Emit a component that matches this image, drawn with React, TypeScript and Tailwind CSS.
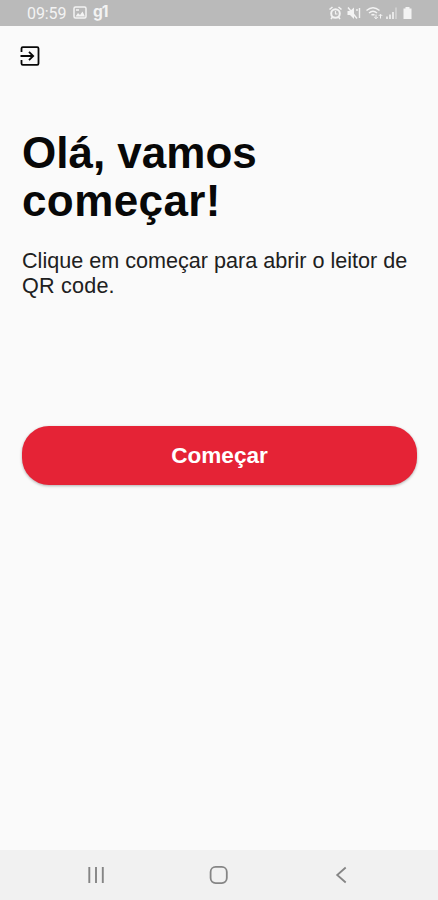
function StatusBar() {
  return (
    <header className="flex h-[26px] shrink-0 items-center justify-between bg-[#bababa] pr-[24px] pl-[27px] text-[#f3f3f3]">
      <div className="flex items-center">
        <span className="w-[39px] pt-[1px] font-[Roboto,sans-serif] text-[16px] leading-[26px] tracking-[-0.1px]">09:59</span>
        <svg className="ml-[7px] h-[14px] w-[14px]" viewBox="0 0 14 14" fill="none" stroke="currentColor" strokeWidth="1.5">
          <rect x="1" y="1" width="12" height="11" rx="1.5" />
          <path d="M2.5 10.5 5 7l2 2 2.5-3.5 2.5 5Z" fill="currentColor" stroke="none" />
          <path d="M3 4h3" />
        </svg>
        <span className="-mt-[2px] ml-[6px] font-[Inter,sans-serif] text-[15.5px] leading-[24px] font-bold tracking-[-1px]">g1</span>
      </div>
      <svg className="h-[18px] w-[86px]" viewBox="0 0 86 18" fill="none" stroke="currentColor" strokeWidth="1.4">
        <circle cx="7.5" cy="9.5" r="4.3" strokeWidth="2" />
        <path d="M1.5 5.5 4.5 3M13.5 5.5l-3-2.5M3 15l1.5-2M12 15l-1.5-2" strokeWidth="1.6" />
        <path d="M7.5 7v3h2" strokeWidth="1.2" />
        <path d="M19.5 7h2.5l4-3.5v11.5l-4-4h-2.5z" fill="currentColor" stroke="none" />
        <path d="m20 3.5 9 11M29 5v2M31.5 4v10" />
        <path d="M38.5 6.5q6.5-5.5 13 0M41 9q4-3.5 8 0M43.5 11.3q1.5-1.5 3 0" />
        <path d="M48 10.5v4m-1.8-1.5 1.8 1.8 1.8-1.8M52.5 14.5v-4m-1.8 1.5 1.8-1.8 1.8 1.8" strokeWidth="1" />
        <path d="M59 12.5v2.5M62 10.5v4.5M65 8v7" strokeWidth="1.6" />
        <path d="M68 3.5v11.5" strokeWidth="1.6" opacity=".45" />
        <path d="M75.5 4.5h2v-1.5h4v1.5h2v10.5h-8z" fill="currentColor" stroke="none" />
      </svg>
    </header>
  );
}

function NavigationBar() {
  return (
    <nav className="flex h-[50px] shrink-0 items-center justify-between bg-[#f1f1f1] px-[86px] text-[#858585]">
      <svg className="h-5 w-5" viewBox="0 0 20 20" stroke="currentColor" strokeWidth="1.9">
        <path d="M3.3 2v16M10 2v16M16.8 2v16" />
      </svg>
      <svg className="h-5 w-5" viewBox="0 0 20 20" fill="none" stroke="currentColor" strokeWidth="1.8">
        <rect x="1.6" y="1.9" width="16.2" height="16.2" rx="5" />
      </svg>
      <svg className="h-5 w-5" viewBox="0 0 20 20" fill="none" stroke="currentColor" strokeWidth="1.8">
        <path d="m13.7 2.500-8.500 7.500 8.500 7.500" />
      </svg>
    </nav>
  );
}

export default function App() {
  return (
    <div className="flex h-[900px] w-full flex-col overflow-hidden bg-[#fafafa] font-['Liberation_Sans',Arial,sans-serif] text-[#080808]">
      <StatusBar />
      <main className="flex flex-1 flex-col px-[22px] pt-[20px]">
        <button aria-label="Sair" className="-ml-[2px] h-5 w-5">
          <svg className="h-5 w-5" viewBox="0 0 20 20" fill="none" stroke="currentColor" strokeWidth="1.8">
            <path d="M1.500 6V2.500q0-1.300 1.300-1.300h14.400q1.300 0 1.300 1.300v15q0 1.300-1.300 1.300h-14.400q-1.300 0-1.300-1.300V14M0.500 10h12M9 5.800l4.200 4.200-4.200 4.200" />
          </svg>
        </button>
        <h1 className="mt-[63px] text-[44px] leading-[47.5px] font-bold">
          Olá, vamos
          <br />
          <span className="tracking-[0.4px]">começar!</span>
        </h1>
        <p className="mt-[24px] text-[21.6px] leading-[25px] whitespace-nowrap text-[#202020]">
          Clique em começar para abrir o leitor de
          <br />
          <span className="tracking-[0.2px]">QR code.</span>
        </p>
        <button className="mt-[128px] h-[59px] w-[395px] shrink-0 rounded-[27px] bg-[#e52336] text-[22.6px] leading-[57px] font-bold text-white shadow-[0_1px_3px_rgba(0,0,0,0.3)]">
          Começar
        </button>
      </main>
      <NavigationBar />
    </div>
  );
}
